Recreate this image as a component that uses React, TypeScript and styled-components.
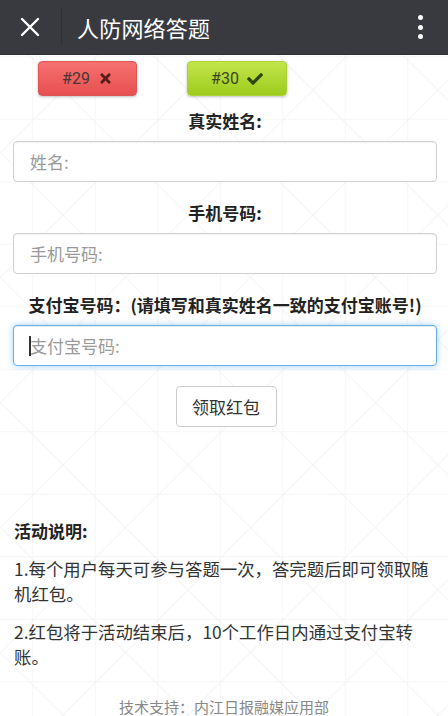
import React from "react";
import styled, { createGlobalStyle } from "styled-components";
import { FaTimes, FaCheck } from "react-icons/fa";

const GlobalStyle = createGlobalStyle`
  html, body { margin: 0; padding: 0; min-height: 100%; }
  body {
    font-family: Roboto, "Noto Sans CJK SC", "Noto Sans", sans-serif;
    color: #333;
    background-color: #fff;
    background-image:
      linear-gradient(45deg, transparent calc(50% - 0.7px), #eeeeee 50%, transparent calc(50% + 0.7px)),
      linear-gradient(-45deg, transparent calc(50% - 0.7px), #eeeeee 50%, transparent calc(50% + 0.7px)),
      linear-gradient(90deg, transparent 32px, #f6f6f6 32px, #f6f6f6 33px, transparent 33px),
      linear-gradient(180deg, transparent 29px, #f6f6f6 29px, #f6f6f6 30px, transparent 30px);
    background-size: 125px 125px, 125px 125px, 62.5px 62.5px, 62.5px 62.5px;
    background-position: 0.5px 27.5px;
  }
  * { box-sizing: border-box; }
`;

const Page = styled.div`
  width: 448px;
  min-height: 716px;
  display: flex;
  flex-direction: column;
`;

const Header = styled.header`
  height: 55px;
  background: #393a3f;
  border-bottom: 1px solid #2c2d31;
  display: flex;
  align-items: center;
  padding: 0 0 0 20px;
`;

const CloseIcon = styled.svg`
  width: 20px;
  height: 20px;
  flex: none;
`;

const Divider = styled.span`
  width: 1px;
  height: 38px;
  background: #2f3034;
  margin-left: 21px;
  flex: none;
`;

const Title = styled.h1`
  margin: 0 0 0 15px;
  font-size: 22px;
  font-weight: 400;
  color: #fff;
  letter-spacing: 0.2px;
  flex: 1;
  font-family: "Noto Sans CJK SC", sans-serif;
`;

const Menu = styled.div`
  width: 56px;
  display: flex;
  flex-direction: column;
  align-items: center;
  gap: 4.5px;
`;

const Dot = styled.span`
  width: 5px;
  height: 5px;
  border-radius: 50%;
  background: #fff;
`;

const Main = styled.main`
  padding: 0 11px 0 13px;
  display: flex;
  flex-direction: column;
`;

const ResultRow = styled.div`
  display: flex;
  gap: 50px;
  padding-left: 25px;
  margin-top: 6px;
`;

const ResultBadge = styled.div<{ $ok?: boolean }>`
  width: ${(p) => (p.$ok ? 100 : 99)}px;
  height: 35px;
  border-radius: 4px;
  display: flex;
  align-items: center;
  justify-content: center;
  gap: 8px;
  font-size: 16px;
  color: ${(p) => (p.$ok ? "#3b4520" : "#4a3434")};
  background: ${(p) =>
    p.$ok
      ? "linear-gradient(#c3e64a, #9dcb1d)"
      : "linear-gradient(#f77070, #e65050)"};
  border: 1px solid ${(p) => (p.$ok ? "#a9d232" : "#dd5555")};
  box-shadow: 0 1px 3px rgba(0, 0, 0, 0.25);
  svg {
    color: ${(p) => (p.$ok ? "#2f4510" : "#5a1b1b")};
  }
`;

const Label = styled.div<{ $gap?: number }>`
  text-align: center;
  font-size: 17px;
  font-weight: 700;
  line-height: 24px;
  color: #222;
  margin-top: ${(p) => p.$gap ?? 19}px;
  font-family: "Noto Sans CJK SC", sans-serif;
`;

const FieldWrap = styled.div`
  position: relative;
  margin-top: 8px;
`;

const Field = styled.input<{ $focused?: boolean }>`
  display: block;
  width: 100%;
  height: 41px;
  border-radius: 4px;
  border: 1px solid ${(p) => (p.$focused ? "#66afe9" : "#cfcfcf")};
  box-shadow: ${(p) =>
    p.$focused
      ? "inset 0 1px 1px rgba(0,0,0,.075), 0 0 6px rgba(102,175,233,.6)"
      : "inset 0 1px 1px rgba(0,0,0,.05)"};
  background: #fff;
  padding: 0 16px;
  font-size: 17px;
  font-family: "Noto Sans CJK SC", sans-serif;
  color: #333;
  outline: none;
  &::placeholder {
    color: #9a9a9a;
  }
`;

const Caret = styled.span`
  position: absolute;
  left: 16px;
  top: 11px;
  width: 1.5px;
  height: 20px;
  background: #333;
`;

const ActionRow = styled.div`
  display: flex;
  justify-content: center;
  margin-top: 20px;
  padding-left: 2px;
`;

const Action = styled.button`
  width: 101px;
  height: 41px;
  border: 1px solid #cccccc;
  border-radius: 4px;
  background: #fff;
  font-size: 17px;
  color: #333;
  font-family: "Noto Sans CJK SC", sans-serif;
  padding: 0;
`;

const Notes = styled.section`
  margin-top: 92px;
  padding-left: 1px;
  font-family: "Noto Sans CJK SC", sans-serif;
`;

const NotesTitle = styled.div`
  font-size: 17px;
  font-weight: 700;
  line-height: 24px;
  color: #222;
`;

const Note = styled.p`
  margin: 13px 0 0;
  font-size: 17.4px;
  line-height: 25px;
  color: #333;
`;

const Footer = styled.footer`
  text-align: center;
  margin-top: 28px;
  font-size: 15px;
  line-height: 20px;
  color: #888;
  font-family: "Noto Sans CJK SC", sans-serif;
  padding-right: 2px;
`;

export default function App() {
  return (
    <>
      <GlobalStyle />
      <Page>
        <Header>
          <CloseIcon viewBox="0 0 20 20">
            <path
              d="M2 2 L18 18 M18 2 L2 18"
              stroke="#fff"
              strokeWidth="2.4"
              strokeLinecap="round"
              fill="none"
            />
          </CloseIcon>
          <Divider />
          <Title>人防网络答题</Title>
          <Menu>
            <Dot />
            <Dot />
            <Dot />
          </Menu>
        </Header>
        <Main>
          <ResultRow>
            <ResultBadge>
              #29 <FaTimes size={15} />
            </ResultBadge>
            <ResultBadge $ok>
              #30 <FaCheck size={16} />
            </ResultBadge>
          </ResultRow>

          <Label $gap={13}>真实姓名:</Label>
          <FieldWrap>
            <Field placeholder="姓名:" />
          </FieldWrap>

          <Label>手机号码:</Label>
          <FieldWrap>
            <Field placeholder="手机号码:" />
          </FieldWrap>

          <Label>支付宝号码：(请填写和真实姓名一致的支付宝账号!)</Label>
          <FieldWrap>
            <Field $focused placeholder="支付宝号码:" />
            <Caret />
          </FieldWrap>

          <ActionRow>
            <Action>领取红包</Action>
          </ActionRow>

          <Notes>
            <NotesTitle>活动说明:</NotesTitle>
            <Note>1.每个用户每天可参与答题一次，答完题后即可领取随机红包。</Note>
            <Note>2.红包将于活动结束后，10个工作日内通过支付宝转账。</Note>
          </Notes>

          <Footer>技术支持：内江日报融媒应用部</Footer>
        </Main>
      </Page>
    </>
  );
}
